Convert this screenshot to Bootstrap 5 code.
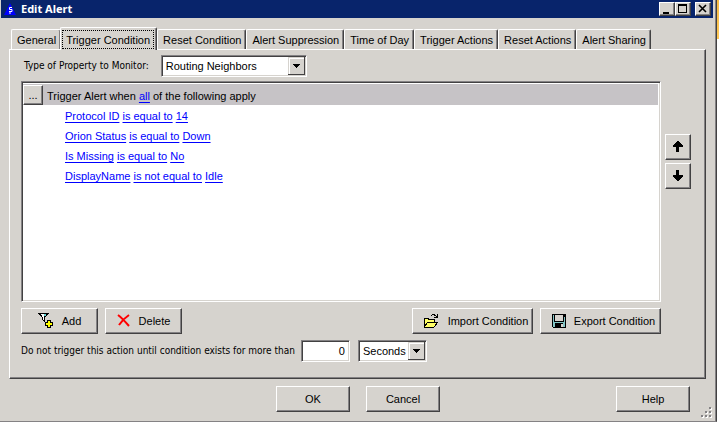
<!DOCTYPE html>
<html lang="en">
<head>
<meta charset="utf-8">
<meta name="viewport" content="width=device-width, initial-scale=1">
<title>Edit Alert</title>
<link href="https://cdn.jsdelivr.net/npm/bootstrap@5.3.0/dist/css/bootstrap.min.css" rel="stylesheet">
<style>
:root{--face:#d6d3ce;--shade:#848284;--dark:#424142;--navy:#08246b}
body{font:11px/14px "Liberation Sans",Arial,sans-serif;color:#000;background:#fff;min-height:100vh}
.win{background:var(--face);border-right:1px solid var(--dark);border-bottom:1px solid var(--shade);box-shadow:inset -1px 0 var(--shade);min-height:100vh;min-width:0}
.behind{width:2px;background:linear-gradient(#f7ba42,#ffc95a) top/100% 39px no-repeat #fff}
.titlebar{background:var(--navy);color:#fff;height:18px;margin:0 3px 0 1px;padding:0 2px 0 3px}
.titlebar h1{font:bold 11px/18px "Noto Sans","Open Sans",sans-serif}
.face{background:var(--face);color:#000;border:1px solid;border-color:#fff var(--dark) var(--dark) #fff;box-shadow:inset -1px -1px var(--shade);border-radius:0;padding:0;font:inherit;white-space:nowrap}
.face:active{border-color:var(--dark) #fff #fff var(--dark)}
.cap{width:16px;height:14px}
.cap svg,.arrow svg,.tool svg{display:block}
.tabs{padding:9px 11px 0}
.tab{height:20px;border:1px solid;border-color:#fff var(--dark) transparent #fff;border-bottom:0;border-radius:2px 2px 0 0;box-shadow:inset -1px 0 var(--shade);background:var(--face);padding:2px 4px 2px 5px;font:inherit;color:#000;white-space:nowrap}
.tab.active{height:23px;margin:0 0 -1px -1px;padding:2px 2px 1px 1px;z-index:1;position:relative}
.tab.active span{display:block;border:1px dotted #000;padding:2px 3px 1px;height:19px}
.pane{margin:0 10px 0 9px;padding:5px 14px 16px 11px;border:1px solid;border-color:#fff var(--dark) var(--dark) #fff;box-shadow:inset -1px -1px var(--shade)}
.pane label{font:10px/14px "DejaVu Sans Condensed","Liberation Sans",sans-serif}
.type-row{gap:12px;padding-left:3px}
.field{border:1px solid;border-color:var(--shade) #fff #fff var(--shade);box-shadow:inset 1px 1px var(--dark),inset -1px -1px var(--face);border-radius:0;background:#fff;color:#000;font:inherit;height:22px;padding:0 4px}
.drop{position:relative}
.drop select{appearance:none;width:100%;padding:0 18px 0 4px}
.drop svg{position:absolute;right:2px;top:2px;pointer-events:none}
.conds{height:221px;padding:2px 2px 2px 1px}
.conds a{color:#00f;text-decoration:underline;text-underline-offset:2px;text-decoration-skip-ink:none}
.head{background:#c6c3c6;height:21px;gap:4px}
.head span{padding-top:2px}
.head .face{width:20px;height:20px;line-height:12px}
.conds li{height:20px;line-height:20px}
.conds ul{padding:1px 0 0 42px}
.arrow{width:26px;height:26px}
.moves{gap:3px;padding-top:53px}
.tool{height:26px}
.tools{gap:7px;margin-top:6px}
.tools .tool{display:flex;align-items:center;justify-content:center;gap:8px}
.w-s{width:77px}.tools .w-l{width:121px;padding-left:6px}.w-cmd{width:74px}
.w-type{width:146px}.w-unit{width:69px}.w-num{width:49px}
.delay{margin-top:6px}
.delay .w-num{margin-left:6px}
.cmds{display:grid;grid-template-columns:1fr auto 1fr;padding:7px 26px 0}
.grip{position:absolute;right:4px;bottom:3px}
</style>
<script src="https://cdn.jsdelivr.net/npm/bootstrap@5.3.0/dist/js/bootstrap.bundle.min.js"></script>
</head>
<body class="d-flex">
<main class="win flex-grow-1 position-relative">
<header class="titlebar d-flex align-items-center">
<svg width="13" height="12" viewBox="0 0 13 12" class="me-1"><path d="M6 0 12 12H0z" fill="#0000ff"/><path d="M8 4.500H5.500v2H8v2H5M5 10h2" stroke="#fff" stroke-width="1" fill="none"/></svg>
<h1 class="m-0 me-auto">Edit Alert</h1>
<button class="face cap" aria-label="Minimize"><svg width="14" height="12"><path d="M3 9h6v2H3z"/></svg></button>
<button class="face cap" aria-label="Maximize"><svg width="14" height="12" shape-rendering="crispEdges"><path d="M2 1h9v9H2zM3 3v6h7V3z" fill-rule="evenodd"/></svg></button>
<button class="face cap ms-1" aria-label="Close"><svg width="14" height="12"><path d="m3 2 7 7m0-7L3 9" stroke="#000" stroke-width="1.600"/></svg></button>
</header>
<div class="tabs d-flex align-items-end" role="tablist">
<button class="tab" role="tab">General</button>
<button class="tab active" role="tab" aria-selected="true"><span>Trigger Condition</span></button>
<button class="tab" role="tab">Reset Condition</button>
<button class="tab" role="tab">Alert Suppression</button>
<button class="tab" role="tab">Time of Day</button>
<button class="tab" role="tab">Trigger Actions</button>
<button class="tab" role="tab">Reset Actions</button>
<button class="tab" role="tab">Alert Sharing</button>
</div>
<section class="pane">
<div class="d-flex align-items-center type-row">
<label for="ptype">Type of Property to Monitor:</label>
<div class="drop w-type"><select id="ptype" class="field"><option>Routing Neighbors</option></select>
<svg width="17" height="18" shape-rendering="crispEdges"><path fill="#d6d3ce" d="M0 0h17v18H0z"/><path d="M1 17V1h15" stroke="#fff" fill="none"/><path d="M0 17.500h16.500V0" stroke="#424142" fill="none"/><path d="M5 7h7v1h-1v1h-1v1H9v1H8v-1H7V9H6V8H5z"/></svg></div>
</div>
<div class="d-flex mt-1">
<div class="flex-grow-1">
<div class="field conds">
<div class="head d-flex align-items-center"><button class="face" aria-label="Condition menu">...</button><span>Trigger Alert when <a href="#">all</a> of the following apply</span></div>
<ul class="list-unstyled m-0">
<li><a href="#">Protocol ID</a> <a href="#">is equal to</a> <a href="#">14</a></li>
<li><a href="#">Orion Status</a> <a href="#">is equal to</a> <a href="#">Down</a></li>
<li><a href="#">Is Missing</a> <a href="#">is equal to</a> <a href="#">No</a></li>
<li><a href="#">DisplayName</a> <a href="#">is not equal to</a> <a href="#">Idle</a></li>
</ul>
</div>
<div class="d-flex tools">
<button class="face tool w-s"><svg width="16" height="16" shape-rendering="crispEdges"><path d="M0 0h11v1h-1v1H9v1H8v1H7v5H6V8H5V7H4V4H3V3H2V2H1V1H0z"/><path d="M3 1h3v1H3zM4 2h2v5H5V4H4z" fill="#fff"/><path d="M6 1h2v2H6z" fill="#63cece"/><path d="M9 7h4v2h2v4h-2v2H9v-2H7V9h2z"/><path d="M10 8h2v2h2v2h-2v2h-2v-2H8v-2h2z" fill="#ff0"/></svg>Add</button>
<button class="face tool w-s"><svg width="14" height="14"><path d="M1 1q4 3 11 11M12 1Q6 5 2 11" stroke="red" stroke-width="2" fill="none"/></svg>Delete</button>
<button class="face tool w-l ms-auto"><svg width="17" height="14" shape-rendering="crispEdges"><path d="M1 4h4v1h6v3h4L11 13H1z" fill="#ff6" stroke="#000"/><path d="M1 13 5 8h10M8 2q3-3 6 1M14 0v3h-3" fill="none" stroke="#000"/></svg>Import Condition</button>
<button class="face tool w-l"><svg width="14" height="14" shape-rendering="crispEdges"><path d="M0 0h14v14H1v-1H0z"/><path d="M1 1h1v7h10V3h1v10H1z" fill="#84c7c6"/><path d="M3 1h8v6H3z" fill="#d6d3ce"/><path d="M3 9h8v4H3z"/><path d="M9 10h2v3H9z" fill="#d6d3ce"/></svg>Export Condition</button>
</div>
</div>
<div class="d-flex flex-column moves ms-1">
<button class="face arrow" aria-label="Move up"><svg width="24" height="24" shape-rendering="crispEdges"><path d="M11 6h2v1h1v1h1v1h1v1h1v2h-4v5h-3v-5H7v-2h1V9h1V8h1V7h1z"/></svg></button>
<button class="face arrow" aria-label="Move down"><svg width="24" height="24" shape-rendering="crispEdges"><path d="M10 6h3v5h4v2h-1v1h-1v1h-1v1h-1v1h-2v-1h-1v-1H9v-1H8v-1H7v-2h3z"/></svg></button>
</div>
</div>
<div class="d-flex align-items-center delay">
<label for="delay">Do not trigger this action until condition exists for more than</label>
<input id="delay" class="field w-num text-end" value="0">
<div class="drop w-unit ms-2"><select class="field" aria-label="Unit"><option>Seconds</option></select>
<svg width="17" height="18" shape-rendering="crispEdges"><path fill="#d6d3ce" d="M0 0h17v18H0z"/><path d="M1 17V1h15" stroke="#fff" fill="none"/><path d="M0 17.500h16.500V0" stroke="#424142" fill="none"/><path d="M5 7h7v1h-1v1h-1v1H9v1H8v-1H7V9H6V8H5z"/></svg></div>
</div>
</section>
<footer class="cmds"><span></span><div class="d-flex gap-3"><button class="face tool w-cmd">OK</button><button class="face tool w-cmd">Cancel</button></div><button class="face tool w-cmd ms-auto">Help</button></footer>
<svg class="grip" width="11" height="11" shape-rendering="crispEdges"><path d="M9 1h2v2H9zM5 5h2v2H5zM9 5h2v2H9zM1 9h2v2H1zM5 9h2v2H5zM9 9h2v2H9z" fill="#fff"/><path d="M8 0h2v2H8zM4 4h2v2H4zM8 4h2v2H8zM0 8h2v2H0zM4 8h2v2H4zM8 8h2v2H8z" fill="#848284"/></svg>
</main>
<div class="behind"></div>
</body>
</html>
